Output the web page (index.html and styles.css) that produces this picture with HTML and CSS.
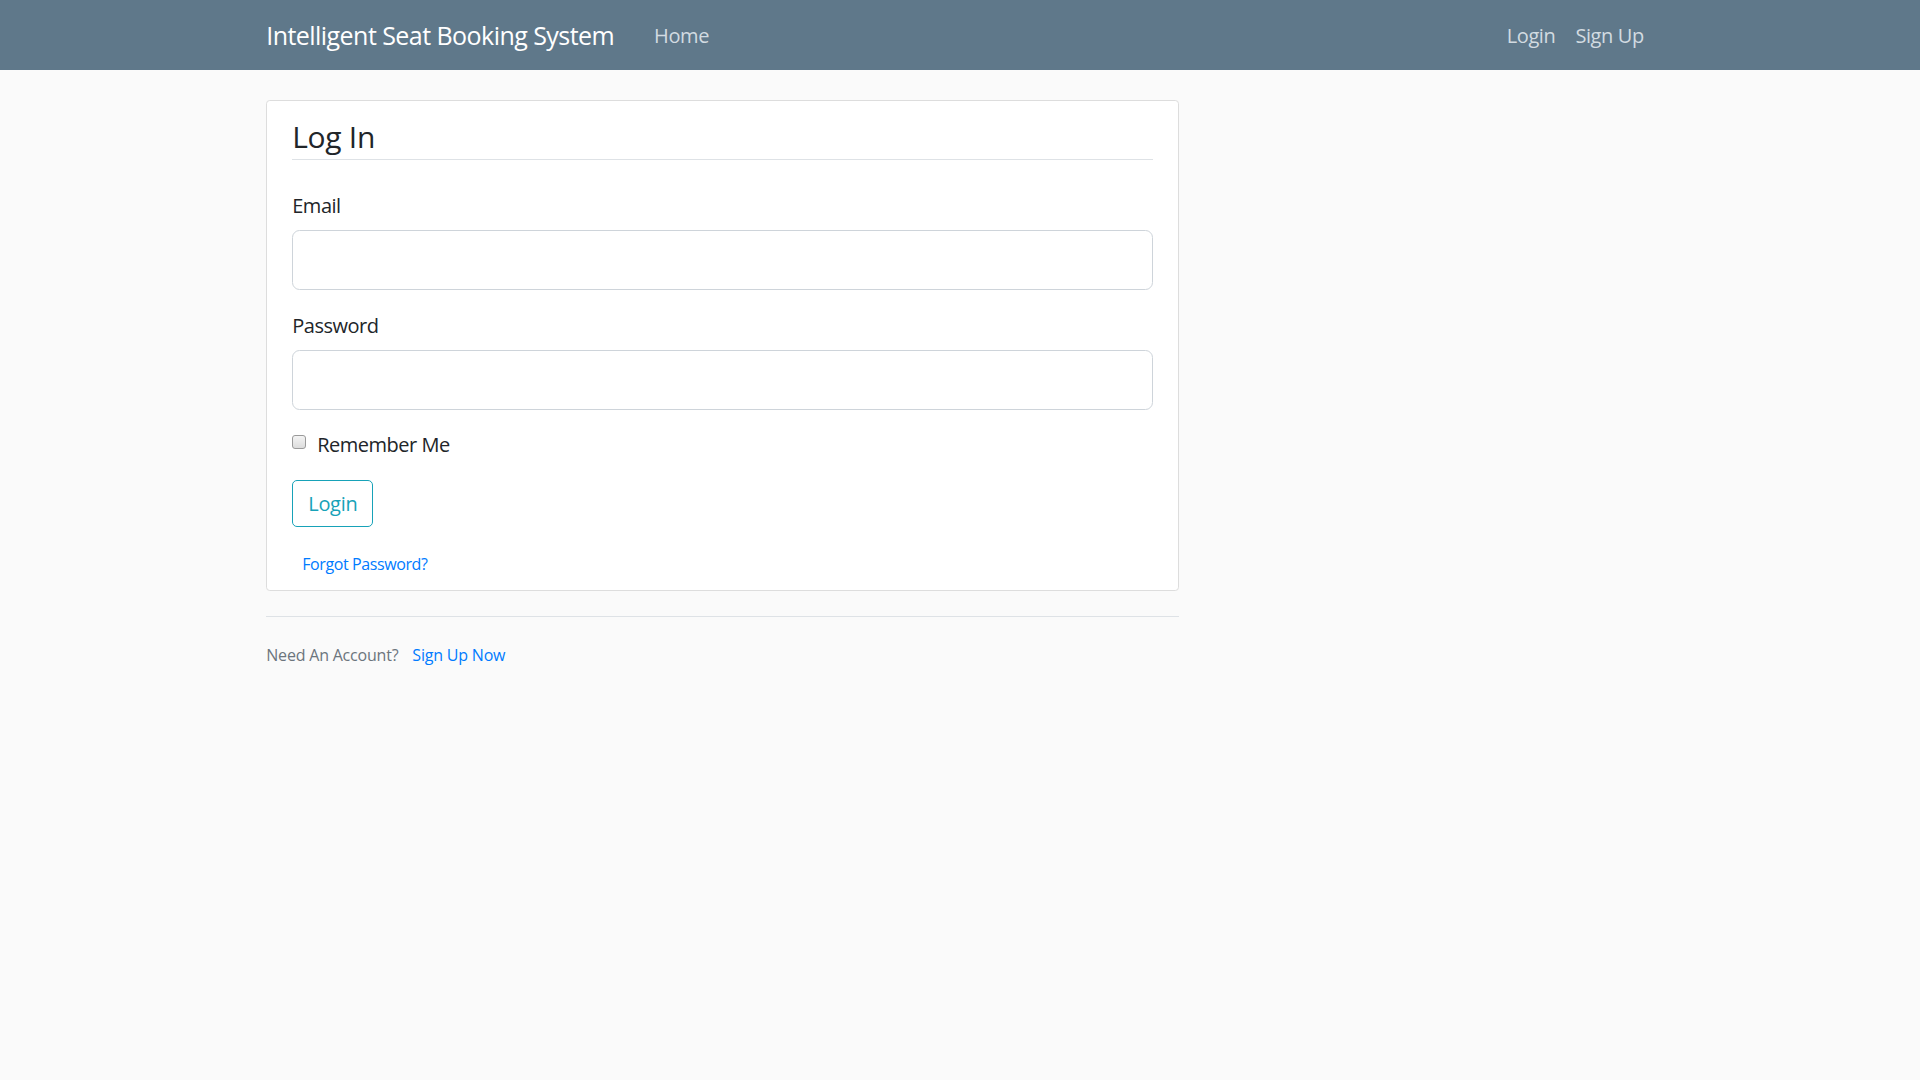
FILE: index.html
```html
<!DOCTYPE html>
<html lang="en">
<head>
<meta charset="utf-8">
<title>Intelligent Seat Booking System</title>
<link rel="stylesheet" href="styles.css">
</head>
<body>
<header class="site-header">
  <nav class="navbar">
    <div class="container nav-inner">
      <a class="brand" href="#">Intelligent Seat Booking System</a>
      <div class="nav-left">
        <a class="nav-link" href="#">Home</a>
      </div>
      <div class="nav-right">
        <a class="nav-link" href="#">Login</a>
        <a class="nav-link" href="#">Sign Up</a>
      </div>
    </div>
  </nav>
</header>
<main class="container">
  <div class="col">
    <div class="content-section">
      <form>
        <fieldset class="form-group">
          <legend class="legend">Log In</legend>
          <div class="field">
            <label class="label">Email</label>
            <input class="input" type="text">
          </div>
          <div class="field">
            <label class="label">Password</label>
            <input class="input" type="password">
          </div>
          <div class="form-check">
            <span class="check"></span>
            <label class="check-label">Remember Me</label>
          </div>
        </fieldset>
        <div class="field">
          <button type="button" class="btn">Login</button>
        </div>
        <div class="forgot-line"><small class="muted ml"><a class="link" href="#">Forgot Password?</a></small></div>
      </form>
    </div>
    <div class="account">
      <small class="muted account-text">Need An Account? <a class="link ml" href="#">Sign Up Now</a></small>
    </div>
  </div>
</main>
</body>
</html>
```
FILE: styles.css
```css
* { box-sizing: border-box; }
html, body { margin: 0; padding: 0; }
body {
  background: #fafafa;
  color: #333333;
  font-family: "Open Sans", "Noto Sans", sans-serif;
  font-size: 20px;
  line-height: 30px;
}
a { text-decoration: none; }
.container {
  width: 1425px;
  margin: 0 auto;
  padding: 0 18.75px;
}
.site-header { height: 70px; }
.navbar {
  background: #5f788a;
  height: 70px;
}
.nav-inner {
  display: flex;
  align-items: center;
  height: 70px;
  padding-top: 2px;
}
.brand {
  color: #ffffff;
  font-size: 25px;
  line-height: 37.5px;
  margin-right: 30px;
  letter-spacing: -0.55px;
}
.nav-left { display: flex; flex: 1; }
.nav-right { display: flex; }
.nav-link {
  color: #d2dbe1;
  font-size: 20px;
  line-height: 30px;
  padding: 10px 10px;
  letter-spacing: -0.4px;
}
main.container { padding-top: 30px; }
.col { width: 912.5px; }
.content-section {
  background: #ffffff;
  border: 1px solid #dddddd;
  border-radius: 3.75px;
  padding: 12.5px 25px 13.5px;
  margin-bottom: 25px;
}
form { margin: 0; }
fieldset.form-group {
  border: 0;
  padding: 0;
  margin: 0 0 20px 0;
  min-width: 0;
}
.legend {
  display: block;
  width: 100%;
  padding: 0;
  font-size: 30px;
  line-height: 45px;
  color: #212529;
  border-bottom: 1px solid #dee2e6;
  margin-bottom: 30px;
  letter-spacing: -0.3px;
}
.field { margin-bottom: 20px; }
.label {
  display: block;
  margin-bottom: 10px;
  padding-top: 1px;
  height: 30px;
  color: #212529;
  letter-spacing: -0.5px;
}
.input {
  display: block;
  width: 100%;
  height: 60px;
  border: 1px solid #ced4da;
  border-radius: 7.5px;
  background: #ffffff;
  padding: 10px 20px;
  font-size: 25px;
}
.form-check {
  display: flex;
  align-items: flex-start;
  height: 30px;
}
.check {
  width: 14px;
  height: 14px;
  margin-top: 5px;
  margin-right: 11px;
  border: 1px solid #9a9a9a;
  border-radius: 3px;
  background: linear-gradient(#f4f4f4, #dcdcdc);
}
.check-label { color: #212529; letter-spacing: -0.5px; }
.btn {
  font-family: inherit;
  font-size: 20px;
  line-height: 30px;
  padding: 8px 15px 7px;
  color: #17a2b8;
  background: transparent;
  border: 1px solid #17a2b8;
  border-radius: 5px;
  letter-spacing: -0.3px;
}
.forgot-line { line-height: 30px; height: 30px; padding-top: 1px; }
.muted {
  color: #6c757d;
  font-size: 16px;
  letter-spacing: -0.4px;
}
.account-text { letter-spacing: -0.2px; }
.ml { margin-left: 10px; }
.link { color: #007bff; }
.account {
  border-top: 1px solid #dee2e6;
  padding-top: 22px;
  line-height: 30px;
}
```
